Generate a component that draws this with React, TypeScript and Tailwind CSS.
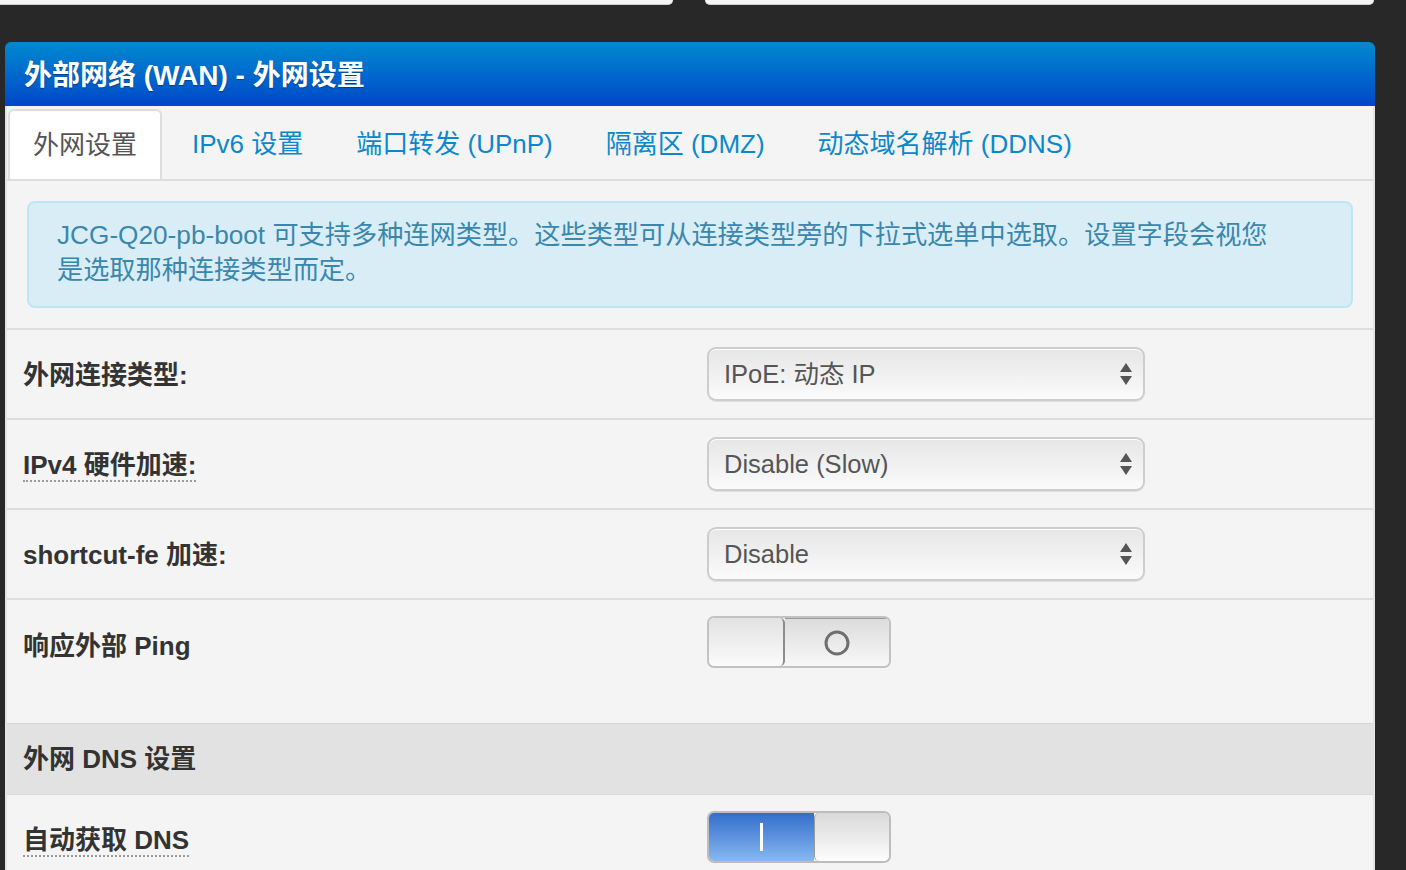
import React from "react";

const Select = ({ value }: { value: string }) => (
  <div className="relative flex h-[54px] w-[438px] items-center rounded-[9px] border-2 border-[#cdcdcd] bg-gradient-to-b from-[#e6e6e6] to-[#fbfbfb] pl-[15px] text-[25.5px] text-[#555] shadow-[inset_0_1px_0_#fff,0_1px_0_#e0e0e0]">
    {value}
    <svg
      className="absolute right-[11px] top-1/2 -translate-y-1/2"
      width="12"
      height="24"
      viewBox="0 0 12 24"
    >
      <path d="M6 1 L12 10 H0 Z" fill="#555" />
      <path d="M6 23 L12 14 H0 Z" fill="#555" />
    </svg>
  </div>
);

const Toggle = ({ on }: { on: boolean }) =>
  on ? (
    <div className="flex h-[52px] w-[184px] overflow-hidden rounded-[7px] border-2 border-[#bdbdbd]">
      <div className="flex w-[105px] items-center justify-center bg-gradient-to-b from-[#326ecb] to-[#88b8f0]">
        <div className="h-[28px] w-[3px] bg-white" />
      </div>
      <div className="flex-1 rounded-[5px] border-l border-[#9a9a9a] bg-gradient-to-b from-[#d9d9d9] to-[#fdfdfd]" />
    </div>
  ) : (
    <div className="flex h-[52px] w-[184px] overflow-hidden rounded-[7px] border-2 border-[#c2c2c2]">
      <div className="w-[76px] rounded-[5px] border-r-2 border-[#8c8c8c] bg-gradient-to-b from-[#e2e2e2] to-[#fbfbfb]" />
      <div className="flex flex-1 items-center justify-center border-t border-[#9a9a9a] bg-gradient-to-b from-[#dcdcdc] to-[#f8f8f8]">
        <svg width="28" height="28" viewBox="0 0 28 28">
          <circle cx="14" cy="14" r="11" fill="none" stroke="#6f6f6f" strokeWidth="3" />
        </svg>
      </div>
    </div>
  );

const Row = ({
  label,
  dotted,
  children,
  tall,
}: {
  label: string;
  dotted?: boolean;
  children: React.ReactNode;
  tall?: boolean;
}) => (
  <div
    className={
      tall
        ? "flex h-[125px] items-start border-t-2 border-[#dedede] pt-[16px]"
        : "flex h-[90px] items-center border-t-2 border-[#dedede]"
    }
  >
    <div className={tall ? "w-[700px] pl-[16px] pt-[11px]" : "w-[700px] pl-[16px] pt-[2px]"}>
      <span
        className={
          dotted
            ? "border-b-2 border-dotted border-[#9a9a9a] text-[26px] font-bold text-[#333]"
            : "text-[26px] font-bold text-[#333]"
        }
      >
        {label}
      </span>
    </div>
    {children}
  </div>
);

const tabs = ["IPv6 设置", "端口转发 (UPnP)", "隔离区 (DMZ)", "动态域名解析 (DDNS)"];

export default function App() {
  return (
    <div
      className="h-[870px] overflow-hidden bg-[#282828]"
      style={{ fontFamily: '"Liberation Sans", "Noto Sans CJK SC", sans-serif' }}
    >
      <div className="flex h-[5px] gap-[32px]">
        <div className="w-[673px] rounded-br-[6px] border-b border-[#cfcfcf] bg-[#f4f4f4]" />
        <div className="w-[669px] rounded-b-[6px] border-b border-[#cfcfcf] bg-[#f4f4f4]" />
      </div>

      <div className="ml-[5px] mt-[37px] w-[1370px]">
        <div className="flex h-[64px] items-center rounded-t-[6px] bg-gradient-to-b from-[#0389d0] to-[#0045c8] px-[19px] pt-[3px] text-[28px] font-bold text-white [text-shadow:0_1px_1px_rgba(0,0,0,0.35)]">
          外部网络 (WAN) - 外网设置
        </div>

        <div className="border-x-2 border-[#e4e4e4] bg-[#f4f4f4]">
          <div className="flex border-b-2 border-[#dddddd] pl-[1px] pt-[3px]">
            <div className="-mb-[2px] mr-[6px] flex h-[70px] items-center rounded-t-[6px] border-2 border-b-0 border-[#dddddd] bg-white px-[23px] text-[26px] text-[#555]">
              外网设置
            </div>
            {tabs.map((t) => (
              <div
                key={t}
                className="mr-[5px] flex h-[70px] items-center px-[24px] text-[26px] text-[#0b88cc]"
              >
                {t}
              </div>
            ))}
          </div>

          <div className="m-[20px] rounded-[8px] border-2 border-[#bde6f1] bg-[#d9edf7] pb-[18px] pl-[28px] pt-[15px] text-[26.2px] leading-[35px] text-[#3a87ad]">
            JCG-Q20-pb-boot 可支持多种连网类型。这些类型可从连接类型旁的下拉式选单中选取。设置字段会视您
            <br />
            是选取那种连接类型而定。
          </div>

          <Row label="外网连接类型:">
            <Select value="IPoE: 动态 IP" />
          </Row>
          <Row label="IPv4 硬件加速:" dotted>
            <Select value="Disable (Slow)" />
          </Row>
          <Row label="shortcut-fe 加速:">
            <Select value="Disable" />
          </Row>
          <Row label="响应外部 Ping" tall>
            <Toggle on={false} />
          </Row>

          <div className="flex h-[71px] items-center border-t border-[#d6d6d6] bg-[#e2e2e2] pl-[16px] text-[26px] font-bold text-[#333]">
            外网 DNS 设置
          </div>

          <div className="flex h-[90px] items-start border-t border-[#dadada] pt-[16px]">
            <div className="w-[700px] pl-[16px] pt-[10px]">
              <span className="border-b-2 border-dotted border-[#9a9a9a] text-[26px] font-bold text-[#333]">
                自动获取 DNS
              </span>
            </div>
            <Toggle on />
          </div>
        </div>
      </div>
    </div>
  );
}
